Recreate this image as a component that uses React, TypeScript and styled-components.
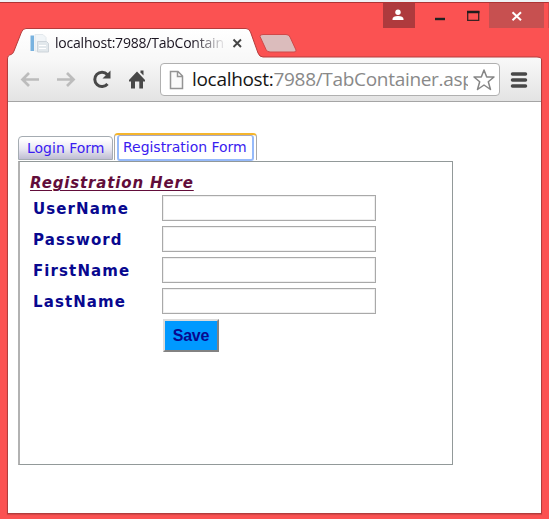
import React from "react";
import styled, { createGlobalStyle } from "styled-components";

const GlobalStyle = createGlobalStyle`
  * { box-sizing: border-box; }
  body { margin: 0; background: #fb5252; overflow: hidden; }
  svg { display: block; flex: none; }
`;

const Window = styled.div`
  width: 549px;
  height: 519px;
  display: flex;
  flex-direction: column;
  background: #fb5252;
  border-top: 2px solid #eef2f5;
  overflow: hidden;
`;

const TitleBar = styled.header`
  height: 26px;
  flex: none;
  display: flex;
  justify-content: flex-end;
  align-items: flex-start;
  border-top: 1px solid #ae3434;
  border-right: 1px solid #d94848;
  padding-right: 4px;
`;

const Caption = styled.div<{ $w: number; $bg?: string }>`
  width: ${(p) => p.$w}px;
  height: 25px;
  background: ${(p) => p.$bg ?? "transparent"};
`;

const TabStrip = styled.div`
  position: relative;
  height: 31px;
  flex: none;
  display: flex;
  align-items: flex-start;
  padding: 5px 0 0 30px;
`;

const StripShape = styled.svg`
  position: absolute;
  left: 0;
  top: 0;
`;

const TabTitle = styled.div`
  position: relative;
  width: 168px;
  height: 21px;
  margin-left: 5px;
  overflow: hidden;
  white-space: nowrap;
  font: 14px/20px "Open Sans", sans-serif;
  letter-spacing: -0.22px;
  color: #1a1420;
  mask-image: linear-gradient(90deg, #000 138px, transparent 172px);
`;

const TabIcon = styled.svg`
  position: relative;
`;

const Frame = styled.div`
  width: 535px;
  height: 455px;
  margin-left: 7px;
  flex: none;
  display: flex;
  flex-direction: column;
  background: #fff;
  border: solid #b23d3d;
  border-width: 0 1px 1px;
  box-shadow: 0 1px 1px #d94646;
`;

const Toolbar = styled.div`
  height: 43px;
  flex: none;
  display: flex;
  align-items: center;
  padding: 0 13px 1px 12px;
  background: linear-gradient(#f8f8f8, #e3e3e3);
  border-bottom: 1px solid #a5a5a5;
`;

const Address = styled.div`
  width: 340px;
  height: 33px;
  margin-right: 10px;
  display: flex;
  align-items: center;
  padding: 0 3px 0 8px;
  background: #fff;
  border: 1px solid #b0b0b0;
  border-radius: 4px;
`;

const Url = styled.div`
  width: 276px;
  height: 28px;
  margin: 0 auto 0 8px;
  overflow: hidden;
  white-space: nowrap;
  font: 19px/26px "Open Sans", sans-serif;
  letter-spacing: -0.31px;
  color: #898989;
  b { font-weight: 400; color: #161616; }
`;

const Page = styled.main`
  padding: 31px 0 0 10px;
`;

const Tabs = styled.div`
  height: 28px;
  display: flex;
  align-items: flex-start;
  font: 14px/20px "DejaVu Sans", sans-serif;
  color: #3a1cf0;
  white-space: nowrap;
`;

const LoginTab = styled.div`
  width: 95px;
  height: 24px;
  margin-top: 3px;
  padding: 1px 0 0 8px;
  background: linear-gradient(#fff 10%, #e8e7f1 55%, #bfbed2);
  border: 1px solid #a5acb2;
  border-radius: 4px 4px 0 0;
`;

const ActiveTab = styled.div`
  width: 143px;
  height: 27px;
  margin-left: 1px;
  padding: 1px 2px 0;
  border: solid #a9a9a9;
  border-width: 0 1px;
  border-radius: 4px 4px 0 0;
  border-top: 2px solid #f5b52c;
`;

const FocusRing = styled.div`
  width: 137px;
  height: 26px;
  margin-top: -1px;
  padding: 1px 0 0 4px;
  letter-spacing: -0.03px;
  border: 2px solid #96bafa;
  border-top: 1px solid #a9a9c0;
  border-radius: 3px;
  background: #fff;
`;

const Panel = styled.section`
  width: 435px;
  height: 304px;
  padding: 10px;
  border: 1px solid #929999;
  border-left: 2px solid #b2b2b2;
  font: bold 15px/22px "DejaVu Sans", sans-serif;
`;

const Heading = styled.h1`
  margin: 0;
  height: 22px;
  font: italic bold 15px/22px "DejaVu Sans", sans-serif;
  letter-spacing: 0.85px;
  text-decoration: underline;
  text-decoration-thickness: 1px;
  text-underline-offset: 2px;
  color: #620d3a;
`;

const Row = styled.div`
  display: grid;
  grid-template-columns: 129px 214px;
  align-items: center;
  height: 26px;
  margin: 1px 0 5px 3px;
  color: #08088f;
  & + & { margin-top: 0; }
`;

const Label = styled.label`
  padding-top: 2px;
  letter-spacing: 1.1px;
`;

const Field = styled.input`
  height: 26px;
  padding: 2px 4px;
  border: 1px solid #a9a9a9;
  box-shadow: inset 0 0 0 1px #efefef;
  outline: none;
  font: 15px "DejaVu Sans", sans-serif;
`;

const Save = styled.button`
  width: 56px;
  height: 33px;
  margin: 0 0 0 133px;
  padding: 0;
  display: block;
  background: #0099ff;
  border: 2px solid;
  border-color: #dcdcdc #828282 #828282 #dcdcdc;
  font: bold 16px/20px "Liberation Sans", sans-serif;
  letter-spacing: -0.2px;
  color: #08088f;
`;

const fields = ["UserName", "Password", "FirstName", "LastName"];

export default function App() {
  return (
    <>
      <GlobalStyle />
      <Window>
        <TitleBar>
          <Caption $w={32} $bg="#ae3a3d">
            <svg width="32" height="25">
              <circle cx="15" cy="9.2" r="2.7" fill="#fff" />
              <path d="M9.5 17v-1c0-2 2.2-3 5.5-3s5.5 1 5.5 3v1z" fill="#fff" />
            </svg>
          </Caption>
          <Caption $w={74}>
            <svg width="74" height="25">
              <path d="M20 16h10" stroke="#222" strokeWidth="2.4" />
              <path d="M52.7 8v9.3h11V8" fill="none" stroke="#3b2222" strokeWidth="1.3" />
              <path d="M52 9h12.4" stroke="#1d1d1d" strokeWidth="2.5" />
            </svg>
          </Caption>
          <Caption $w={55} $bg="#c75050">
            <svg width="55" height="25">
              <path d="M23.5 9.3l8.5 8M32 9.3l-8.5 8" stroke="#fff" strokeWidth="2" />
            </svg>
          </Caption>
        </TitleBar>
        <TabStrip>
          <StripShape width="549" height="31">
            <defs>
              <linearGradient id="tab" x1="0" y1="0" x2="0" y2="1">
                <stop offset="0" stopColor="#fff" />
                <stop offset="1" stopColor="#f8f8f8" />
              </linearGradient>
            </defs>
            <path
              d="M7.5 31C7.5 28 9 27 11 26.500Q13 26 14 23L21.500 4Q23 .5 26 .5H246Q249 .5 250.500 4L258 25Q259.500 29 263 29H537Q541.500 29 541.500 31"
              fill="url(#tab)"
              stroke="#b53c3c"
            />
            <path
              d="M263 6.500H286Q289 6.500 290 9L296 22Q296.500 24 294 24H270Q267 24 266 21.500L260 8.500Q259.500 6.500 263 6.500Z"
              fill="#dbbcbc"
              stroke="#d04848"
            />
          </StripShape>
          <TabIcon width="20" height="20">
            <path d="M.5 2.500H4V18H.5z" fill="#78b2df" />
            <path d="M5 1.500h8l3 3V18H5z" fill="#f1f5f8" stroke="#e2e8ec" />
            <path d="M7.500 8.500h9l2 2V19H7.500z" fill="#e2e8ec" stroke="#cdd4da" />
            <path d="M9 12.500h7M9 15.500h7" stroke="#fff" />
          </TabIcon>
          <TabTitle>localhost:7988/TabContain</TabTitle>
          <TabIcon width="22" height="20">
            <path d="M10.500 6.500l7.500 7.500M18 6.500L10.500 14" stroke="#444" strokeWidth="1.900" />
          </TabIcon>
        </TabStrip>
        <Frame>
          <Toolbar>
            <svg width="140" height="34" fill="none">
              <path d="M19 16.500H2M9 10L2.500 16.500 9 23" stroke="#bcbcbc" strokeWidth="2.700" />
              <path d="M37 16.500h17M47 10l6.500 6.500-6.500 6.500" stroke="#bcbcbc" strokeWidth="2.700" />
              <path d="M87.300 11.500A7.200 7.200 0 1 0 87.500 21" stroke="#484848" strokeWidth="3" />
              <path d="M90.500 7.500V15.500H82.500z" fill="#484848" />
              <path d="M109 17L117 8.500 125 17V18.500H123V25.500H119.300V18.500H115V25.500H111V18.500H109z" fill="#484848" />
              <path d="M120.500 7.500h3v5l-3-3z" fill="#484848" />
            </svg>
            <Address>
              <svg width="15" height="20" viewBox="0 0 15 20">
                <path d="M1.500 1.500H9L13.500 6V18.500H1.500zM8.500 1.500V6.500H13.500" fill="#fafafa" stroke="#949494" strokeWidth="1.500" />
              </svg>
              <Url><b>localhost:</b>7988/TabContainer.asp</Url>
              <svg width="24" height="24" viewBox="0 0 24 24">
                <path d="M12 2L14.700 9H22L16.300 13.800 18.500 21.500 12 17 5.500 21.500 7.700 13.800 2 9H9.300z" fill="#fff" stroke="#858585" strokeWidth="1.500" strokeLinejoin="round" />
              </svg>
            </Address>
            <svg width="18" height="20">
              <path d="M2.500 4H15.500M2.500 10H15.500M2.500 16H15.500" stroke="#484848" strokeWidth="3.500" strokeLinecap="round" />
            </svg>
          </Toolbar>
          <Page>
            <Tabs>
              <LoginTab>Login Form</LoginTab>
              <ActiveTab>
                <FocusRing>Registration Form</FocusRing>
              </ActiveTab>
            </Tabs>
            <Panel>
              <Heading>Registration Here</Heading>
              {fields.map((name) => (
                <Row key={name}>
                  <Label htmlFor={name}>{name}</Label>
                  <Field id={name} type={name === "Password" ? "password" : "text"} />
                </Row>
              ))}
              <Save>Save</Save>
            </Panel>
          </Page>
        </Frame>
      </Window>
    </>
  );
}
